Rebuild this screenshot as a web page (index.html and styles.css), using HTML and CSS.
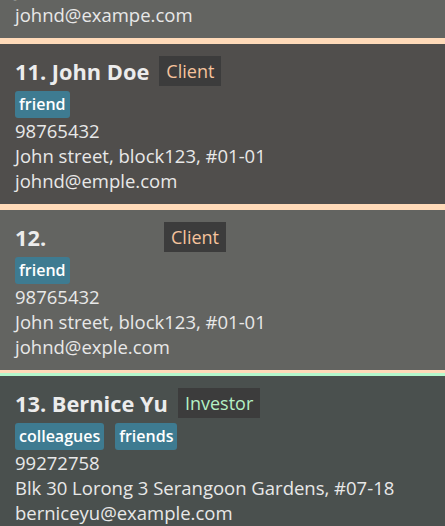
FILE: index.html
```html
<!DOCTYPE html>
<html>
<head>
<meta charset="utf-8">
<link rel="stylesheet" href="styles.css">
</head>
<body>
<div class="list">
  <div class="card client light">
    <div class="title-row"><span class="name">10. John Doe</span><span class="badge">Client</span></div>
    <div class="tags"><span class="tag">friend</span></div>
    <div class="line">98765432</div>
    <div class="line">John street, block123, #01-01</div>
    <div class="line">johnd@exampe.com</div>
  </div>
  <div class="card client dark">
    <div class="title-row"><span class="name">11. John Doe</span><span class="badge">Client</span></div>
    <div class="tags"><span class="tag">friend</span></div>
    <div class="line">98765432</div>
    <div class="line">John street, block123, #01-01</div>
    <div class="line">johnd@emple.com</div>
  </div>
  <div class="card client light">
    <div class="title-row"><span class="name blank">12. </span><span class="badge">Client</span></div>
    <div class="tags"><span class="tag">friend</span></div>
    <div class="line">98765432</div>
    <div class="line">John street, block123, #01-01</div>
    <div class="line">johnd@exple.com</div>
  </div>
  <div class="card investor green">
    <div class="title-row"><span class="name">13. Bernice Yu</span><span class="badge">Investor</span></div>
    <div class="tags"><span class="tag">colleagues</span><span class="tag">friends</span></div>
    <div class="line">99272758</div>
    <div class="line">Blk 30 Lorong 3 Serangoon Gardens, #07-18</div>
    <div class="line">berniceyu@example.com</div>
  </div>
</div>
</body>
</html>
```
FILE: styles.css
```css
html, body {
  margin: 0;
  padding: 0;
  overflow: hidden;
  background: #4a504e;
}
body {
  font-family: "Open Sans", "Noto Sans", sans-serif;
  color: #e8e8e8;
}
.list {
  display: flex;
  flex-direction: column;
  margin-top: -125px;
}
.card {
  box-sizing: border-box;
  height: 166px;
  padding: 12px 15px 0 15px;
  display: flex;
  flex-direction: column;
  border-top: 3px solid;
  border-bottom: 3px solid;
}
.card.client { border-color: #ffdab9; }
.card.investor { border-color: #b4f8cd; }
.card.light { background: #636461; }
.card.dark { background: #504e4c; }
.card.green { background: #4a504e; }
.title-row {
  display: flex;
  align-items: center;
  gap: 10px;
  height: 30px;
}
.name {
  font-weight: 700;
  font-size: 21.8px;
  color: #ececec;
  white-space: pre;
}
.name.blank {
  width: 139px;
}
.badge {
  background: #3c3c3c;
  height: 30px;
  line-height: 30px;
  padding: 0 7px;
  font-size: 18px;
}
.client .badge { color: #f5c39c; }
.investor .badge { color: #b4f0c4; }
.tags {
  display: flex;
  gap: 11px;
  margin-top: 5px;
}
.tag {
  background: #3e7b91;
  border-radius: 3px;
  height: 27px;
  line-height: 27px;
  padding: 0 4px;
  font-weight: 600;
  font-size: 16px;
  color: #ffffff;
}
.line {
  font-size: 18.5px;
  line-height: 25px;
  white-space: nowrap;
}
```
